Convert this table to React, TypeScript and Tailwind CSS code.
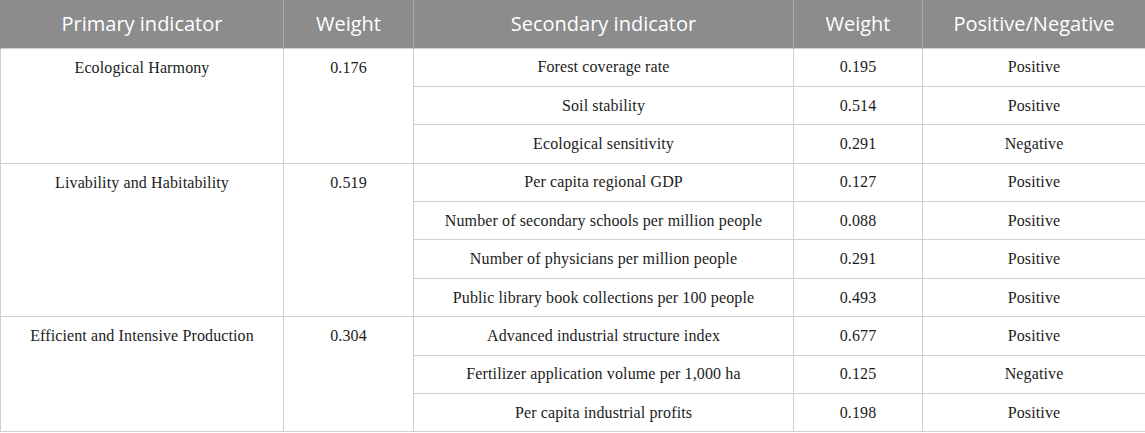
import React from "react";

type Group = {
  primary: string;
  weight: string;
  rows: { name: string; weight: string; sign: string }[];
};

const groups: Group[] = [
  {
    primary: "Ecological Harmony",
    weight: "0.176",
    rows: [
      { name: "Forest coverage rate", weight: "0.195", sign: "Positive" },
      { name: "Soil stability", weight: "0.514", sign: "Positive" },
      { name: "Ecological sensitivity", weight: "0.291", sign: "Negative" },
    ],
  },
  {
    primary: "Livability and Habitability",
    weight: "0.519",
    rows: [
      { name: "Per capita regional GDP", weight: "0.127", sign: "Positive" },
      { name: "Number of secondary schools per million people", weight: "0.088", sign: "Positive" },
      { name: "Number of physicians per million people", weight: "0.291", sign: "Positive" },
      { name: "Public library book collections per 100 people", weight: "0.493", sign: "Positive" },
    ],
  },
  {
    primary: "Efficient and Intensive Production",
    weight: "0.304",
    rows: [
      { name: "Advanced industrial structure index", weight: "0.677", sign: "Positive" },
      { name: "Fertilizer application volume per 1,000 ha", weight: "0.125", sign: "Negative" },
      { name: "Per capita industrial profits", weight: "0.198", sign: "Positive" },
    ],
  },
];

const th = "border-x border-[#a8a8a8] font-normal text-center";
const td = "border border-[#cfcfcf] text-center align-middle";

export default function App() {
  return (
    <div className="w-[1145px] h-[433px] bg-white">
      <table className="w-[1145px] border-collapse table-fixed">
        <colgroup>
          <col className="w-[283px]" />
          <col className="w-[130px]" />
          <col className="w-[380px]" />
          <col className="w-[129px]" />
          <col className="w-[223px]" />
        </colgroup>
        <thead>
          <tr className="h-[48px] bg-[#8c8c8c] text-white text-[20px] font-['Open_Sans',sans-serif]">
            <th className={th + " border-l-[#8c8c8c]"}>Primary indicator</th>
            <th className={th}>Weight</th>
            <th className={th}>Secondary indicator</th>
            <th className={th}>Weight</th>
            <th className={th + " border-r-[#8c8c8c]"}>Positive/Negative</th>
          </tr>
        </thead>
        <tbody className="text-[16px] tracking-[0.12px] text-[#1c1c1c] font-['Liberation_Serif',serif]">
          {groups.map((g) =>
            g.rows.map((r, i) => (
              <tr key={g.primary + r.name} className="h-[38.4px]">
                {i === 0 && (
                  <>
                    <td rowSpan={g.rows.length} className={td + " !align-top pt-[7px]"}>
                      {g.primary}
                    </td>
                    <td rowSpan={g.rows.length} className={td + " !align-top pt-[7px]"}>
                      {g.weight}
                    </td>
                  </>
                )}
                <td className={td}>{r.name}</td>
                <td className={td}>{r.weight}</td>
                <td className={td}>{r.sign}</td>
              </tr>
            ))
          )}
        </tbody>
      </table>
    </div>
  );
}
